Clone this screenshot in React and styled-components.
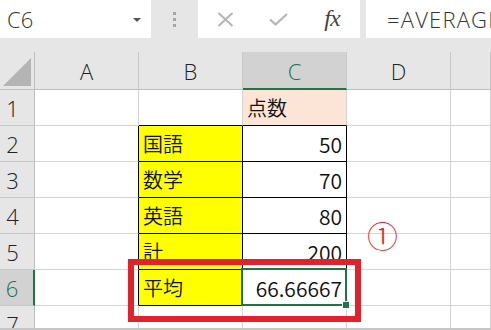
import React from 'react';
import styled, { createGlobalStyle } from 'styled-components';

const GlobalStyle = createGlobalStyle`
    html, body {
        margin: 0;
        padding: 0;
        background: #fff;
    }
    body {
        width: 491px;
        height: 330px;
        overflow: hidden;
        font-family: "Noto Sans CJK JP", "Noto Sans", sans-serif;
    }
`;

const GRID = '#d4d4d4';
const GREEN = '#217346';
const RED = '#e3212b';

const Window = styled.div`
    position: relative;
    width: 491px;
    height: 330px;
    display: flex;
    flex-direction: column;
    overflow: hidden;
    background: #fff;
`;

const FormulaBar = styled.div`
    height: 52px;
    flex: none;
    background: #e6e6e6;
    display: flex;
    align-items: flex-start;
`;

const NameBox = styled.div`
    width: 151px;
    height: 38px;
    background: #fff;
    display: flex;
    align-items: center;
    justify-content: space-between;
    padding: 0 10px 0 7px;
    box-sizing: border-box;
    font-family: "Open Sans", "Noto Sans", sans-serif;
    font-weight: 300;
    font-size: 22px;
    color: #333;
`;

const Caret = styled.span`
    width: 0;
    height: 0;
    border-left: 4px solid transparent;
    border-right: 4px solid transparent;
    border-top: 4px solid #555;
    margin-top: 2px;
`;

const Grip = styled.div`
    width: 47px;
    height: 38px;
    display: flex;
    flex-direction: column;
    align-items: center;
    justify-content: center;
    gap: 3px;

    span {
        width: 3px;
        height: 3px;
        background: #a6a6a6;
    }
`;

const ButtonBox = styled.div`
    width: 162px;
    height: 38px;
    background: #fff;
    display: flex;
    align-items: center;
`;

const IconSlot = styled.div`
    width: ${p => p.w}px;
    display: flex;
    align-items: center;
    justify-content: center;
`;

const Fx = styled.span`
    font-family: "Liberation Serif", serif;
    font-style: italic;
    font-size: 24px;
    color: #444;
    letter-spacing: -1px;
    margin-top: -2px;
`;

const FormulaInput = styled.div`
    flex: 1;
    margin-left: 6px;
    height: 38px;
    background: #fff;
    display: flex;
    align-items: center;
    padding-left: 21px;
    white-space: nowrap;
    overflow: hidden;
    font-family: "Open Sans", "Noto Sans", sans-serif;
    font-weight: 300;
    font-size: 22px;
    letter-spacing: 1.2px;
    color: #333;
`;

const Sheet = styled.div`
    flex: 1;
    overflow: hidden;
    display: grid;
    grid-template-columns: 35px 104px 104px 104px 104px 1fr;
    grid-auto-rows: 36px;
    grid-template-rows: 38px;
    align-content: start;
`;

const Edge = styled.div`
    height: 2px;
    flex: none;
    background: #c6c6c6;
`;

const Corner = styled.div`
    background: #e6e6e6;
    border-right: 1px solid #bdbdbd;
    border-bottom: 1px solid #bdbdbd;
    display: flex;
    align-items: flex-end;
    padding: 0 3px 3px 3px;
    box-sizing: border-box;
`;

const ColHead = styled.div`
    background: ${p => (p.$active ? '#d2d2d2' : '#e6e6e6')};
    color: ${p => (p.$active ? GREEN : '#222')};
    border-right: 1px solid #c8c8c8;
    border-bottom: ${p => (p.$active ? `2px solid ${GREEN}` : '1px solid #bdbdbd')};
    display: flex;
    align-items: center;
    justify-content: center;
    font-family: "Open Sans", "Noto Sans", sans-serif;
    font-weight: 300;
    font-size: 22px;
    box-sizing: border-box;
    padding-top: ${p => (p.$active ? 1 : 0)}px;
`;

const RowHead = styled.div`
    background: ${p => (p.$active ? '#d2d2d2' : '#e6e6e6')};
    color: ${p => (p.$active ? GREEN : '#222')};
    border-right: ${p => (p.$active ? `2px solid ${GREEN}` : '1px solid #bdbdbd')};
    border-bottom: 1px solid #c8c8c8;
    display: flex;
    align-items: center;
    justify-content: center;
    padding-right: 9px;
    box-sizing: border-box;
    font-family: "Open Sans", "Noto Sans", sans-serif;
    font-weight: 300;
    font-size: 22px;
`;

const Cell = styled.div`
    position: relative;
    background: ${p => p.$fill || '#fff'};
    border-right: 1px solid ${p => p.$r || GRID};
    border-bottom: 1px solid ${p => p.$b || GRID};
    box-sizing: border-box;
    display: flex;
    align-items: center;
    justify-content: ${p => (p.$num ? 'flex-end' : 'flex-start')};
    padding: 0 4px;
    font-family: "Noto Sans CJK JP", sans-serif;
    font-weight: 350;
    font-size: ${p => (p.$num ? 21 : 20)}px;
    color: #111;
    white-space: nowrap;

    ${p => p.$selected && `
        &::after {
            content: '';
            position: absolute;
            left: -2px;
            top: -2px;
            right: -1px;
            bottom: -1px;
            border: 2px solid ${GREEN};
            z-index: 2;
        }
        &::before {
            content: '';
            position: absolute;
            right: -4px;
            bottom: -4px;
            width: 6px;
            height: 6px;
            background: ${GREEN};
            border: 1px solid #fff;
            z-index: 3;
        }
    `}
`;

const Callout = styled.div`
    position: absolute;
    left: 128px;
    top: 259px;
    width: 233px;
    height: 63px;
    border: 6px solid ${RED};
    box-sizing: border-box;
    z-index: 5;
`;

const Marker = styled.div`
    position: absolute;
    left: 367px;
    top: 217px;
    font-family: "Noto Sans CJK JP", sans-serif;
    font-weight: 300;
    font-size: 31px;
    line-height: 36px;
    color: ${RED};
    z-index: 5;
`;

const rows = [
    { n: 1, b: '', c: '点数', cFill: '#fce4d6', bB: '#000', cB: '#000' },
    { n: 2, b: '国語', c: '50' },
    { n: 3, b: '数学', c: '70' },
    { n: 4, b: '英語', c: '80' },
    { n: 5, b: '計', c: '200' },
    { n: 6, b: '平均', c: '66.66667', selected: true },
    { n: 7, b: '', c: '' },
];

export default function App() {
    return (
        <Window>
            <GlobalStyle />
            <FormulaBar>
                <NameBox>
                    C6
                    <Caret />
                </NameBox>
                <Grip>
                    <span />
                    <span />
                    <span />
                </Grip>
                <ButtonBox>
                    <IconSlot w={54}>
                        <svg width="17" height="15" viewBox="0 0 17 15">
                            <path d="M1.5 1 L15.5 14 M15.5 1 L1.5 14" stroke="#b5b5b5" strokeWidth="2" fill="none" />
                        </svg>
                    </IconSlot>
                    <IconSlot w={52}>
                        <svg width="19" height="13" viewBox="0 0 19 13">
                            <path d="M1 6.5 L6.5 11.5 L18 1" stroke="#b5b5b5" strokeWidth="2.2" fill="none" />
                        </svg>
                    </IconSlot>
                    <IconSlot w={56}>
                        <Fx>fx</Fx>
                    </IconSlot>
                </ButtonBox>
                <FormulaInput>=AVERAGE(C2:C4)</FormulaInput>
            </FormulaBar>

            <Sheet>
                <Corner>
                    <svg width="28" height="28" viewBox="0 0 28 28">
                        <polygon points="0,28 28,28 28,0" fill="#b4b4b4" />
                    </svg>
                </Corner>
                <ColHead>A</ColHead>
                <ColHead>B</ColHead>
                <ColHead $active>C</ColHead>
                <ColHead>D</ColHead>
                <ColHead />

                {rows.map(r => {
                    const boxed = r.n >= 2 && r.n <= 6;
                    return (
                        <React.Fragment key={r.n}>
                            <RowHead $active={r.selected}>{r.n}</RowHead>
                            <Cell $r={boxed ? '#000' : undefined} />
                            <Cell
                                $fill={boxed ? '#ffff00' : undefined}
                                $r={boxed ? '#000' : undefined}
                                $b={boxed || r.bB ? '#000' : undefined}
                            >
                                {r.b}
                            </Cell>
                            <Cell
                                $num={boxed}
                                $fill={r.cFill}
                                $r={boxed ? '#000' : undefined}
                                $b={boxed || r.cB ? '#000' : undefined}
                                $selected={r.selected}
                            >
                                {r.c}
                            </Cell>
                            <Cell />
                            <Cell />
                        </React.Fragment>
                    );
                })}
            </Sheet>
            <Edge />

            <Callout />
            <Marker>①</Marker>
        </Window>
    );
}
